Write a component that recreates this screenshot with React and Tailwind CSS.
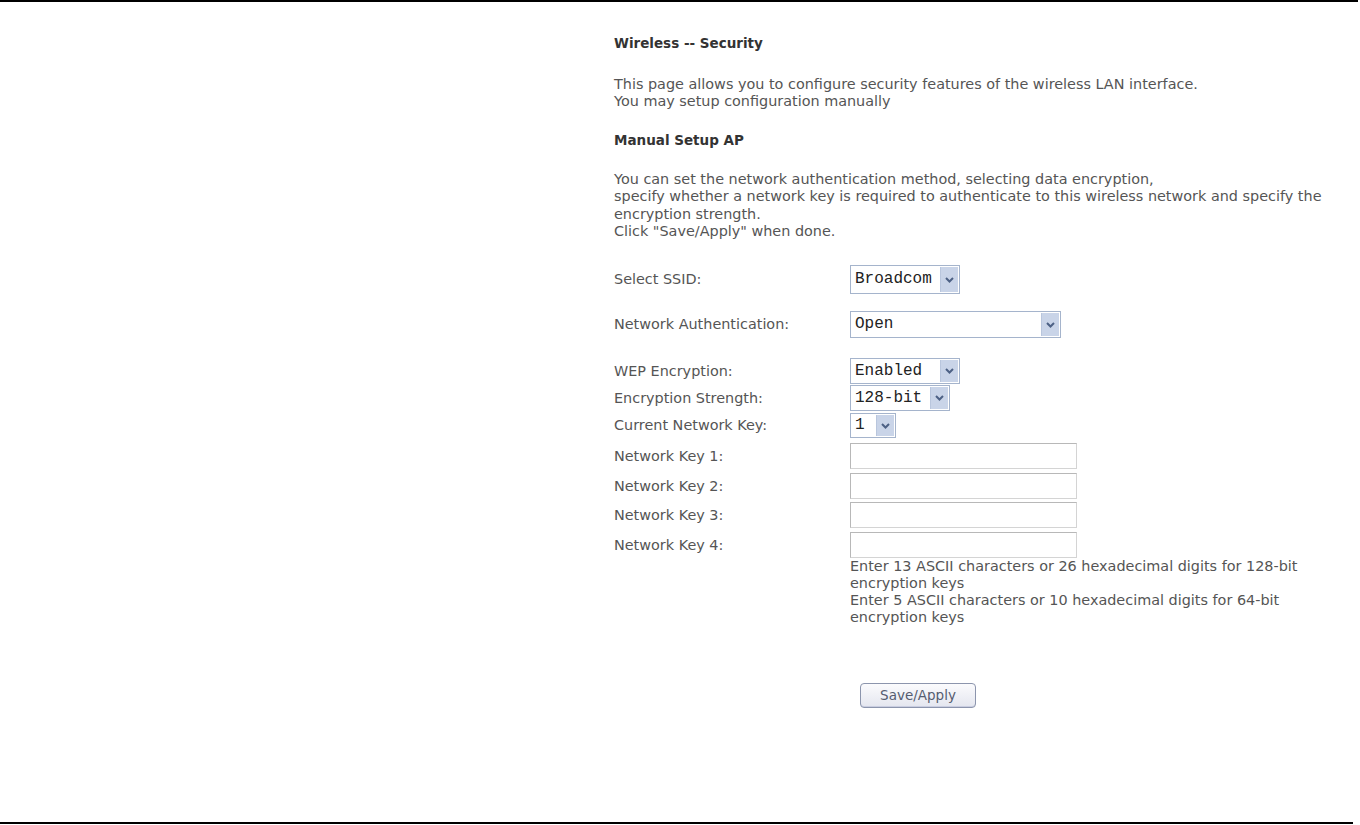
import React from "react";

function Arrow() {
  return (
    <span className="flex h-full w-[18px] shrink-0 items-center justify-center border-l border-[#b9c6dd] bg-[#c9d4e8]">
      <svg width="9" height="6" viewBox="0 0 9 6">
        <path d="M1 1 L4.5 4.5 L8 1" fill="none" stroke="#4d6185" strokeWidth="2" />
      </svg>
    </span>
  );
}

function Select({ value, width, height }) {
  return (
    <div
      className={`flex items-stretch border border-[#a5b4cc] bg-white p-[1px] ${width} ${height}`}
    >
      <span className="flex flex-1 items-center pl-[3px] font-['Liberation_Mono',monospace] text-[16px] text-[#222]">
        {value}
      </span>
      <Arrow />
    </div>
  );
}

function Input() {
  return <div className="h-[26px] w-[227px] border border-[#b8b8b8] border-b-[#d4d4d4] border-r-[#d4d4d4] bg-white" />;
}

function Row({ label, mt, h, children }) {
  return (
    <div className={`flex items-center ${mt} ${h}`}>
      <div className="w-[236px] shrink-0">{label}</div>
      {children}
    </div>
  );
}

export default function App() {
  return (
    <div className="flex h-[825px] w-[1360px] flex-col bg-white font-['DejaVu_Sans',sans-serif] text-[14.4px] leading-[17px] text-[#555]">
      <div className="h-[2px] w-[1358px] bg-black" />
      <div className="flex-1 pl-[614px] pt-[33px]">
        <div className="text-[13.5px] font-bold text-[#333]">Wireless -- Security</div>
        <div className="mt-[24px]">
          This page allows you to configure security features of the wireless LAN interface.
          <br />
          You may setup configuration manually
        </div>
        <div className="mt-[22px] text-[13.5px] font-bold text-[#333]">Manual Setup AP</div>
        <div className="mt-[22px] leading-[17.3px]">
          You can set the network authentication method, selecting data encryption,
          <br />
          specify whether a network key is required to authenticate to this wireless network and specify the
          <br />
          encryption strength.
          <br />
          Click "Save/Apply" when done.
        </div>

        <Row label="Select SSID:" mt="mt-[25px]" h="h-[29px]">
          <Select value="Broadcom" width="w-[110px]" height="h-[29px]" />
        </Row>
        <Row label="Network Authentication:" mt="mt-[17px]" h="h-[27px]">
          <Select value="Open" width="w-[211px]" height="h-[27px]" />
        </Row>
        <Row label="WEP Encryption:" mt="mt-[20px]" h="h-[26px]">
          <Select value="Enabled" width="w-[110px]" height="h-[26px]" />
        </Row>
        <Row label="Encryption Strength:" mt="mt-[1px]" h="h-[26px]">
          <Select value="128-bit" width="w-[100px]" height="h-[26px]" />
        </Row>
        <Row label="Current Network Key:" mt="mt-[2px]" h="h-[25px]">
          <Select value="1" width="w-[46px]" height="h-[25px]" />
        </Row>
        <Row label="Network Key 1:" mt="mt-[5px]" h="h-[26px]">
          <Input />
        </Row>
        <Row label="Network Key 2:" mt="mt-[4px]" h="h-[26px]">
          <Input />
        </Row>
        <Row label="Network Key 3:" mt="mt-[3px]" h="h-[26px]">
          <Input />
        </Row>
        <Row label="Network Key 4:" mt="mt-[4px]" h="h-[26px]">
          <Input />
        </Row>
        <div className="ml-[236px] mt-[0px]">
          Enter 13 ASCII characters or 26 hexadecimal digits for 128-bit
          <br />
          encryption keys
          <br />
          Enter 5 ASCII characters or 10 hexadecimal digits for 64-bit
          <br />
          encryption keys
        </div>
        <div className="ml-[246px] mt-[57px]">
          <button className="h-[25px] w-[116px] rounded-[4px] border border-[#8c95ad] bg-gradient-to-b from-[#fbfbfd] to-[#e4e6ef] text-[13.5px] text-[#555c70] shadow-[inset_0_-1px_0_#c9cde0]">
            Save/Apply
          </button>
        </div>
      </div>
      <div className="mb-[1px] h-[2px] w-[1353px] bg-black" />
    </div>
  );
}
